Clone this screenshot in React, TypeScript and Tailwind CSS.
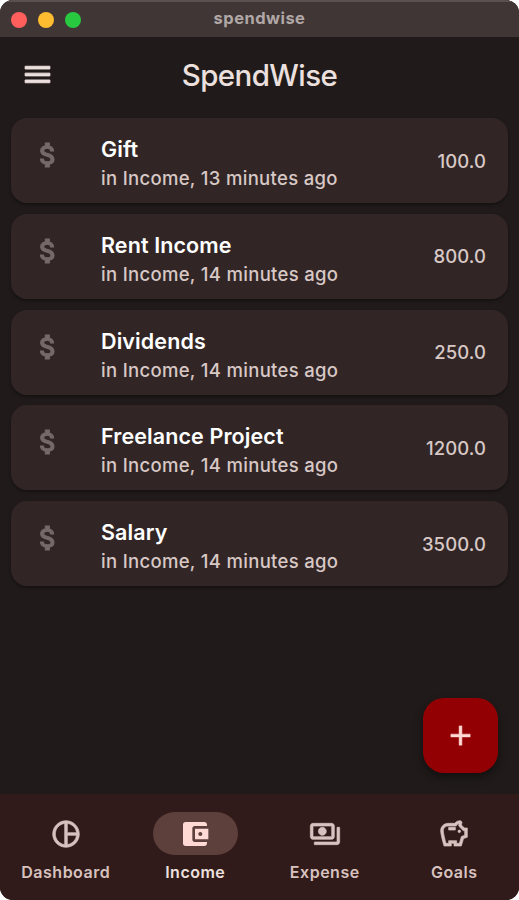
import React from "react";
import {
  MdMenu,
  MdAttachMoney,
  MdAdd,
  MdPieChartOutline,
  MdAccountBalanceWallet,
  MdOutlinePayments,
  MdOutlineSavings,
} from "react-icons/md";

const entries = [
  { title: "Gift", minutes: 13, amount: "100.0" },
  { title: "Rent Income", minutes: 14, amount: "800.0" },
  { title: "Dividends", minutes: 14, amount: "250.0" },
  { title: "Freelance Project", minutes: 14, amount: "1200.0" },
  { title: "Salary", minutes: 14, amount: "3500.0" },
];

const tabs = [
  { label: "Dashboard", Icon: MdPieChartOutline, active: false },
  { label: "Income", Icon: MdAccountBalanceWallet, active: true },
  { label: "Expense", Icon: MdOutlinePayments, active: false },
  { label: "Goals", Icon: MdOutlineSavings, active: false },
];

function TitleBar() {
  return (
    <div className="grid h-[37px] shrink-0 grid-cols-[1fr_auto_1fr] items-center border-t-2 border-[#5a504f] bg-[#3f3635]">
      <div className="flex gap-[11px] pl-[11px]">
        <span className="size-4 rounded-full bg-[#ff5f5c]" />
        <span className="size-4 rounded-full bg-[#febc30]" />
        <span className="size-4 rounded-full bg-[#28c840]" />
      </div>
      <span className="pb-[3px] text-[16.5px] leading-5 font-bold tracking-[0.45px] text-[#b0a7a6]">spendwise</span>
    </div>
  );
}

function Header() {
  return (
    <header className="grid h-[75px] shrink-0 grid-cols-[1fr_auto_1fr] items-center">
      <MdMenu className="ml-[21px] size-[33px] text-[#ece0df] [&_path:not([fill=none])]:stroke-[0.7]" />
      <h1 className="pt-px text-[29.5px] leading-9 font-[450] tracking-[-0.6px] text-[#ece0df]">SpendWise</h1>
    </header>
  );
}

function EntryCard({ title, minutes, amount }: { title: string; minutes: number; amount: string }) {
  return (
    <li className="flex h-[85px] rounded-2xl bg-[#312625] pr-[22px] pl-[21px] shadow-[0_2px_3px_rgba(0,0,0,0.35)]">
      <MdAttachMoney className="mt-[21px] size-8 text-[#756a69] [&_path:not([fill=none])]:stroke-[0.8]" />
      <div className="ml-[37px] flex-1 pt-4">
        <div className="text-[21.5px] leading-[30px] font-semibold tracking-[0.1px] text-white">{title}</div>
        <div className="pt-px text-[18.5px] leading-[27px] font-medium tracking-[0.31px] text-[#d8c8c6]">
          in Income, {minutes} minutes ago
        </div>
      </div>
      <span className="self-center text-[18.5px] leading-6 font-medium tracking-[0.1px] text-[#d8c8c6]">{amount}</span>
    </li>
  );
}

export default function App() {
  return (
    <div className="h-[900px] w-[519px] bg-white font-['Inter','Liberation_Sans',sans-serif]">
      <div className="flex h-full flex-col overflow-hidden rounded-[13px] bg-[#201b1a]">
        <TitleBar />
        <Header />
        <main className="flex flex-1 flex-col px-[11px] pt-[6px]">
          <ul className="flex flex-col gap-[10.8px]">
            {entries.map((entry) => (
              <EntryCard key={entry.title} {...entry} />
            ))}
          </ul>
          <button className="mt-auto mr-[10px] mb-[21px] flex size-[75px] items-center justify-center self-end rounded-[21px] bg-[#930003] shadow-[0_4px_8px_rgba(0,0,0,0.45)]">
            <MdAdd className="size-[33px] text-[#ffdad4] [&_path:not([fill=none])]:stroke-[0.4]" />
          </button>
        </main>
        <nav className="grid h-[106px] shrink-0 grid-cols-4 bg-[#301b1a] pt-[18px] pl-px">
          {tabs.map(({ label, Icon, active }) => (
            <div key={label} className="flex flex-col items-center">
              <div
                className={
                  active
                    ? "flex h-[43px] w-[85px] items-center justify-center rounded-full bg-[#5d3f3c] text-[#ffdad4]"
                    : "flex h-[43px] w-[85px] items-center justify-center text-[#d8c2bf]"
                }
              >
                <Icon className={active ? "size-8" : "size-8 [&_path:not([fill=none])]:stroke-[0.5]"} />
              </div>
              <span
                className={
                  active
                    ? "mt-[5px] text-[16px] leading-6 font-semibold tracking-[0.5px] text-[#ece0df]"
                    : "mt-[5px] text-[16px] leading-6 font-semibold tracking-[0.5px] text-[#d8c2bf]"
                }
              >
                {label}
              </span>
            </div>
          ))}
        </nav>
      </div>
    </div>
  );
}
